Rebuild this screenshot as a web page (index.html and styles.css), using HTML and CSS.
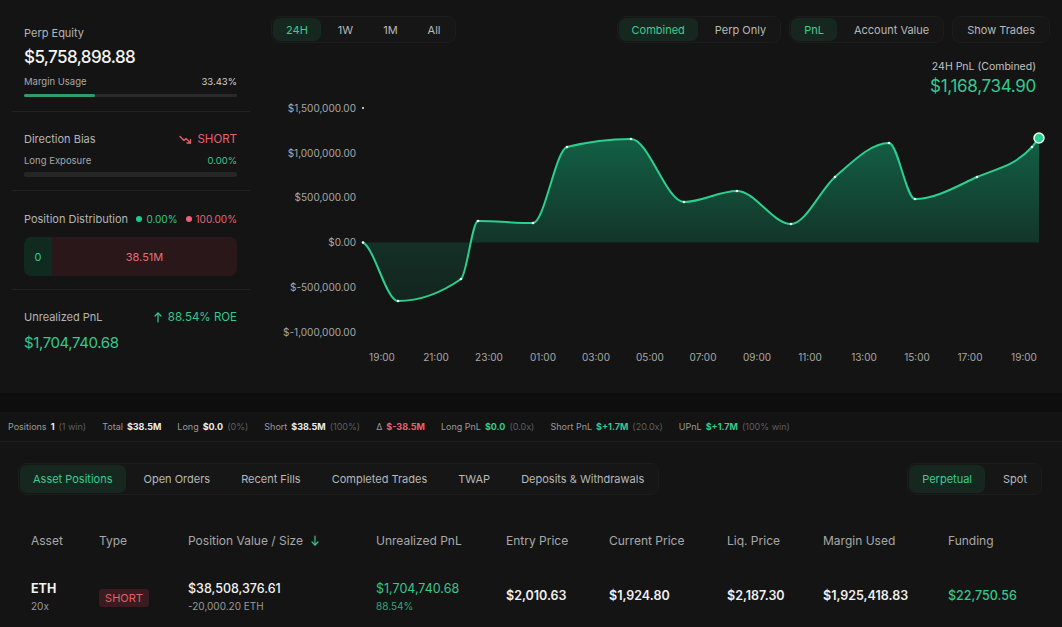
FILE: index.html
```html
<!DOCTYPE html>
<html>
<head>
<meta charset="utf-8">
<link rel="stylesheet" href="styles.css">
</head>
<body>
<div class="top">
  <aside class="left">
    <section class="sec sec-equity">
      <div class="label">Perp Equity</div>
      <div class="big">$5,758,898.88</div>
      <div class="row small"><span>Margin Usage</span><span class="light">33.43%</span></div>
      <div class="bar"><div class="bar-fill" style="width:33.43%"></div></div>
    </section>
    <section class="sec sec-bias">
      <div class="row label"><span>Direction Bias</span><span class="red bias"><svg class="ico" width="13" height="12" viewBox="0 0 13 12"><polyline points="1,3.5 5,7.5 7,5.5 11.5,10" fill="none" stroke="currentColor" stroke-width="1.3" stroke-linecap="round" stroke-linejoin="round"/><polyline points="8,10 11.5,10 11.5,6.5" fill="none" stroke="currentColor" stroke-width="1.3" stroke-linecap="round" stroke-linejoin="round"/></svg>SHORT</span></div>
      <div class="row small mt6"><span>Long Exposure</span><span class="green">0.00%</span></div>
      <div class="bar bar-thick"></div>
    </section>
    <section class="sec sec-dist">
      <div class="row label"><span>Position Distribution</span><span class="legend"><i class="dot dot-g"></i><span class="green">0.00%</span><i class="dot dot-r"></i><span class="pink">100.00%</span></span></div>
      <div class="dist"><div class="dist-long">0</div><div class="dist-short">38.51M</div></div>
    </section>
    <section class="sec sec-upnl">
      <div class="row label"><span>Unrealized PnL</span><span class="green roe"><svg class="ico" width="10" height="12" viewBox="0 0 10 12"><line x1="5" y1="11" x2="5" y2="2" stroke="currentColor" stroke-width="1.2" stroke-linecap="round"/><polyline points="2,5 5,2 8,5" fill="none" stroke="currentColor" stroke-width="1.2" stroke-linecap="round" stroke-linejoin="round"/></svg>88.54% ROE</span></div>
      <div class="pnl green">$1,704,740.68</div>
    </section>
  </aside>
  <main class="chart-col">
    <div class="toolbar">
      <div class="seg"><span class="tab on">24H</span><span class="tab">1W</span><span class="tab">1M</span><span class="tab">All</span></div>
      <div class="spacer"></div>
      <div class="seg"><span class="tab on">Combined</span><span class="tab">Perp Only</span></div>
      <div class="seg"><span class="tab on">PnL</span><span class="tab">Account Value</span></div>
      <div class="seg"><span class="tab">Show Trades</span></div>
    </div>
    <div class="summary">
      <div class="sum-label">24H PnL (Combined)</div>
      <div class="sum-value green">$1,168,734.90</div>
    </div>
    <svg class="chart" width="779" height="283" viewBox="271 97 779 283">
      <defs>
        <linearGradient id="fillg" gradientUnits="userSpaceOnUse" x1="0" y1="138" x2="0" y2="302">
          <stop offset="0" stop-color="#10b981" stop-opacity="0.46"/>
          <stop offset="0.634" stop-color="#10b981" stop-opacity="0.2"/>
          <stop offset="0.64" stop-color="#10b981" stop-opacity="0.17"/>
          <stop offset="1" stop-color="#10b981" stop-opacity="0.1"/>
        </linearGradient>
      </defs>
      <path d="M363,242.5 C374.67,248.3 386.33,301 398,301 C419,301 440,293.7 461,279 C466.67,275 472.33,221 478,221 C496.33,221 514.67,223 533,223 C544.33,223 555.67,149.8 567,147 C588.33,141.7 609.67,139 631,139 C648.67,139 666.33,202 684,202 C701.67,202 719.33,191 737,191 C755,191 773,224 791,224 C805.67,224 820.33,189.8 835,177 C853,161.3 871,143 889,143 C897.67,143 906.33,199 915,199 C935.67,199 956.33,186.4 977,177 C995.33,168.7 1013.67,167 1032,147 C1034.33,144.5 1036.67,141.2 1039,138 L1039,242.5 L363,242.5 Z" fill="url(#fillg)"/>
      <text class="wm" x="655" y="246" text-anchor="middle">hyperdash.info</text>
      <path d="M363,242.5 C374.67,248.3 386.33,301 398,301 C419,301 440,293.7 461,279 C466.67,275 472.33,221 478,221 C496.33,221 514.67,223 533,223 C544.33,223 555.67,149.8 567,147 C588.33,141.7 609.67,139 631,139 C648.67,139 666.33,202 684,202 C701.67,202 719.33,191 737,191 C755,191 773,224 791,224 C805.67,224 820.33,189.8 835,177 C853,161.3 871,143 889,143 C897.67,143 906.33,199 915,199 C935.67,199 956.33,186.4 977,177 C995.33,168.7 1013.67,167 1032,147 C1034.33,144.5 1036.67,141.2 1039,138" fill="none" stroke="#2bcf8e" stroke-width="2" stroke-linecap="round"/>
      <g fill="#e8fff4">
        <circle cx="363" cy="242.5" r="1.3"/><circle cx="398" cy="301" r="1.3"/><circle cx="461" cy="279" r="1.3"/><circle cx="478" cy="221" r="1.3"/><circle cx="533" cy="223" r="1.3"/><circle cx="567" cy="147" r="1.3"/><circle cx="631" cy="139" r="1.3"/><circle cx="684" cy="202" r="1.3"/><circle cx="737" cy="191" r="1.3"/><circle cx="791" cy="224" r="1.3"/><circle cx="835" cy="177" r="1.3"/><circle cx="889" cy="143" r="1.3"/><circle cx="915" cy="199" r="1.3"/><circle cx="977" cy="177" r="1.3"/><circle cx="1032" cy="147" r="1.3"/>
        <circle cx="363" cy="108" r="1"/>
      </g>
      <circle cx="1039" cy="138" r="5" fill="#2bcf8e" stroke="#e8fff4" stroke-width="1.5"/>
      <g class="ylab" text-anchor="end">
        <text x="356" y="111.5">$1,500,000.00</text>
        <text x="356" y="156.5">$1,000,000.00</text>
        <text x="356" y="201">$500,000.00</text>
        <text x="356" y="246">$0.00</text>
        <text x="356" y="290.5">$-500,000.00</text>
        <text x="356" y="335.5">$-1,000,000.00</text>
      </g>
      <g class="xlab" text-anchor="middle">
        <text x="382" y="361">19:00</text>
        <text x="436" y="361">21:00</text>
        <text x="489" y="361">23:00</text>
        <text x="543" y="361">01:00</text>
        <text x="596" y="361">03:00</text>
        <text x="650" y="361">05:00</text>
        <text x="703" y="361">07:00</text>
        <text x="757" y="361">09:00</text>
        <text x="810" y="361">11:00</text>
        <text x="864" y="361">13:00</text>
        <text x="917" y="361">15:00</text>
        <text x="970" y="361">17:00</text>
        <text x="1024" y="361">19:00</text>
      </g>
    </svg>
  </main>
</div>
<div class="gap"></div>
<div class="stats">
  <span class="st"><span class="k">Positions</span><b>1</b><span class="m">(1 win)</span></span>
  <span class="st"><span class="k">Total</span><b>$38.5M</b></span>
  <span class="st"><span class="k">Long</span><b>$0.0</b><span class="m">(0%)</span></span>
  <span class="st"><span class="k">Short</span><b>$38.5M</b><span class="m">(100%)</span></span>
  <span class="st"><span class="k">Δ</span><b class="red">$-38.5M</b></span>
  <span class="st"><span class="k">Long PnL</span><b class="green">$0.0</b><span class="m">(0.0x)</span></span>
  <span class="st"><span class="k">Short PnL</span><b class="green">$+1.7M</b><span class="m">(20.0x)</span></span>
  <span class="st"><span class="k">UPnL</span><b class="green">$+1.7M</b><span class="m">(100% win)</span></span>
</div>
<div class="bottom">
  <div class="tabs-row">
    <div class="seg"><span class="tab on">Asset Positions</span><span class="tab">Open Orders</span><span class="tab">Recent Fills</span><span class="tab">Completed Trades</span><span class="tab">TWAP</span><span class="tab">Deposits &amp; Withdrawals</span></div>
    <div class="seg"><span class="tab on">Perpetual</span><span class="tab">Spot</span></div>
  </div>
  <div class="table">
    <div class="thead">
      <div>Asset</div>
      <div>Type</div>
      <div class="sort">Position Value / Size<svg class="ico" width="10" height="12" viewBox="0 0 10 12"><line x1="5" y1="1" x2="5" y2="10" stroke="currentColor" stroke-width="1.2" stroke-linecap="round"/><polyline points="2,7 5,10 8,7" fill="none" stroke="currentColor" stroke-width="1.2" stroke-linecap="round" stroke-linejoin="round"/></svg></div>
      <div>Unrealized PnL</div>
      <div>Entry Price</div>
      <div>Current Price</div>
      <div>Liq. Price</div>
      <div>Margin Used</div>
      <div>Funding</div>
    </div>
    <div class="trow">
      <div><div class="l1 bold">ETH</div><div class="l2">20x</div></div>
      <div><span class="badge">SHORT</span></div>
      <div><div class="l1 med">$38,508,376.61</div><div class="l2">-20,000.20 ETH</div></div>
      <div><div class="l1 green">$1,704,740.68</div><div class="l2 green">88.54%</div></div>
      <div class="v">$2,010.63</div>
      <div class="v">$1,924.80</div>
      <div class="v">$2,187.30</div>
      <div class="v">$1,925,418.83</div>
      <div class="v green">$22,750.56</div>
    </div>
  </div>
</div>
</body>
</html>
```

FILE: styles.css
```css
* { box-sizing: border-box; }
body {
  margin: 0;
  width: 1062px;
  height: 627px;
  overflow: hidden;
  background: #0e0e0e;
  font-family: Inter, "Noto Sans", sans-serif;
  color: #e8e8e8;
}
.green { color: #35c88f; }
.red { color: #e5636f; }
.pink { color: #e5637a; }
.light { color: #d0d0d0; }

.top {
  display: flex;
  height: 393px;
  background: #141414;
}
.left { width: 255px; flex: none; }
.sec {
  margin: 0 5px 0 12px;
  padding: 0 13px 0 12px;
  border-bottom: 1px solid #222;
}
.sec:last-child { border-bottom: none; }
.sec-equity { padding-top: 24px; padding-bottom: 14px; }
.sec-bias { padding-top: 18px; padding-bottom: 13px; }
.sec-dist { padding-top: 19px; padding-bottom: 13px; }
.sec-upnl { padding-top: 18px; }

.label { font-size: 11px; line-height: 18px; color: #b4b4b4; }
.row { display: flex; justify-content: space-between; align-items: center; }
.big {
  font-size: 17px;
  line-height: 24px;
  margin-top: 3px;
  color: #f4f4f4;
  font-weight: 500;
  letter-spacing: -0.6px;
}
.small { font-size: 9.5px; line-height: 14px; color: #a8a8a8; margin-top: 6px; }
.mt6 { margin-top: 6px; }
.bar { height: 3px; margin-top: 5px; background: #2a2a2a; border-radius: 2px; }
.bar-thick { height: 5px; margin-top: 4px; background: #262626; }
.bar-fill { height: 100%; background: #2e9a6f; border-radius: 2px; }
.bias { display: flex; align-items: center; gap: 5px; font-size: 11.5px; }
.ico { display: block; flex: none; }
.legend { display: flex; align-items: center; gap: 4px; font-size: 10px; }
.dot { display: inline-block; width: 6px; height: 6px; border-radius: 50%; font-style: normal; }
.dot-g { background: #22c98f; }
.dot-r { background: #f0607a; margin-left: 4px; }
.dist {
  display: flex;
  height: 39px;
  margin-top: 9px;
  border-radius: 7px;
  overflow: hidden;
  font-size: 11px;
}
.dist-long {
  width: 28px;
  background: #112a1f;
  color: #35c88f;
  display: flex; align-items: center; justify-content: center;
}
.dist-short {
  flex: 1;
  background: #2a1719;
  color: #e0707e;
  display: flex; align-items: center; justify-content: center;
}
.roe { display: flex; align-items: center; gap: 5px; font-size: 11.5px; }
.pnl { font-size: 15px; line-height: 24px; margin-top: 5px; letter-spacing: -0.4px; }

.chart-col { flex: 1; padding: 16px 13px 0 16px; }
.toolbar { display: flex; height: 27px; gap: 8px; }
.spacer { flex: 1; }
.seg {
  display: flex;
  gap: 4px;
  padding: 1px;
  background: #161616;
  border: 1px solid #1c1c1c;
  border-radius: 8px;
}
.tab {
  display: flex;
  align-items: center;
  padding: 0 13px;
  border-radius: 7px;
  font-size: 11px;
  color: #b8b8b8;
  white-space: nowrap;
}
.tab.on { background: #15271f; color: #3dcc92; }
.summary { margin-top: 16px; height: 38px; text-align: right; padding-right: 14px; }
.sum-label { font-size: 10.5px; line-height: 16px; color: #c2c2c2; }
.sum-value { font-size: 17px; line-height: 22px; letter-spacing: -0.3px; }
.chart { display: block; }
.chart text { font-family: Inter, "Noto Sans", sans-serif; }
.ylab, .xlab { font-size: 10px; fill: #a8a8a8; }
.wm { font-size: 46px; font-weight: 600; fill: rgba(255,255,255,0.022); }

.gap { height: 19px; }
.stats {
  display: flex;
  align-items: center;
  gap: 16px;
  height: 30px;
  padding-left: 8px;
  background: #131313;
  border-bottom: 1px solid #1c1c1c;
  font-size: 9px;
}
.st { display: flex; align-items: center; gap: 4px; white-space: nowrap; }
.st .k { color: #9a9a9a; }
.st b { font-weight: 700; color: #ececec; }
.st b.red { color: #e5636f; }
.st b.green { color: #35c88f; }
.st .m { color: #5e5e5e; }

.bottom {
  height: 185px;
  background: #141414;
  padding: 21px 20px 0 18px;
}
.tabs-row { display: flex; justify-content: space-between; height: 32px; }
.tabs-row .seg { gap: 5px; }
.table { padding-left: 13px; }
.thead, .trow {
  display: grid;
  grid-template-columns: 68px 89px 188px 130px 103px 118px 96px 125px 1fr;
  align-items: center;
}
.thead { margin-top: 34px; line-height: 24px; font-size: 12px; color: #a8a8a8; }
.sort { display: flex; align-items: center; gap: 7px; }
.sort .ico { color: #35c88f; }
.trow { margin-top: 26px; height: 34px; }
.l1 { font-size: 12.5px; line-height: 20px; }
.l2 { font-size: 10px; line-height: 14px; color: #9a9a9a; }
.l2.green { color: #2fa878; }
.bold { font-weight: 700; color: #f2f2f2; }
.med { font-weight: 500; color: #f2f2f2; }
.v { font-size: 12.5px; font-weight: 600; color: #f0f0f0; padding-bottom: 2px; }
.v.green { color: #35c88f; font-weight: 500; }
.badge {
  display: inline-flex;
  align-items: center;
  justify-content: center;
  width: 50px;
  height: 18px;
  margin-top: 4px;
  border-radius: 3px;
  background: #3a1b1f;
  color: #e0606d;
  font-size: 11px;
}
```
